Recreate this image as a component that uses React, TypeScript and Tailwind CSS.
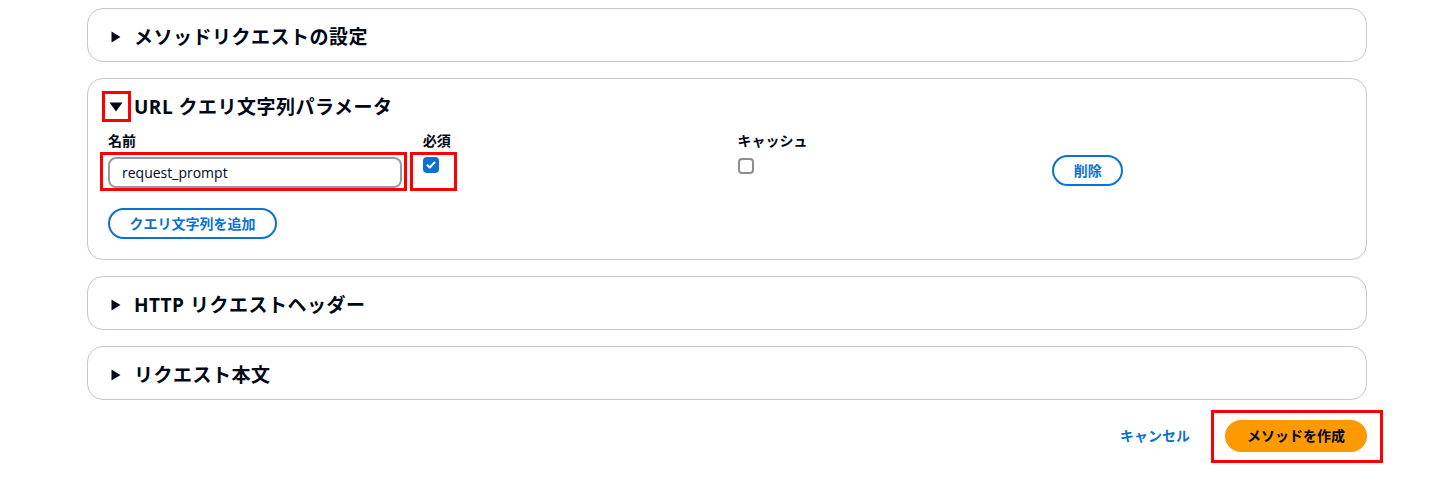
import React, { useState } from "react";

const font = { fontFamily: '"Open Sans", "Noto Sans CJK JP", sans-serif' };

const CaretRight = () => (
  <svg width="16" height="16" viewBox="0 0 16 16" className="shrink-0">
    <polygon points="3.5,2.5 12.5,8 3.5,13.5" fill="#000716" />
  </svg>
);

const CaretDown = () => (
  <svg width="16" height="16" viewBox="0 0 16 16" className="shrink-0">
    <polygon points="1.5,3.5 14.5,3.5 8,12.5" fill="#000716" />
  </svg>
);

// red annotation frame drawn over an element
const Mark = ({ className }: { className: string }) => (
  <div className={`pointer-events-none absolute border-[3px] border-[#ff0000] ${className}`} />
);

const Section = ({ title }: { title: string }) => (
  <div className="rounded-2xl border border-[#c6c6cd] bg-white px-5 pt-4 pb-3">
    <div className="flex items-center gap-[10px] h-6">
      <CaretRight />
      <h2 className="text-[19px] tracking-[0.5px] font-bold leading-6 text-[#000716]">{title}</h2>
    </div>
  </div>
);

const Check = ({ on, toggle }: { on: boolean; toggle: () => void }) => (
  <button
    onClick={toggle}
    className={`flex h-4 w-4 items-center justify-center rounded-[4px] ${
      on ? "bg-[#0972d3]" : "border-2 border-[#8c8c94] bg-white"
    }`}
  >
    {on && (
      <svg width="12" height="12" viewBox="0 0 12 12">
        <path d="M2.5 6.2l2.3 2.3 4.7-5" stroke="white" strokeWidth="2" fill="none" strokeLinecap="round" strokeLinejoin="round" />
      </svg>
    )}
  </button>
);

export default function App() {
  const [required, setRequired] = useState(true);
  const [cache, setCache] = useState(false);

  return (
    <div className="min-h-[485px] w-[1452px] bg-white" style={font}>
      <div className="ml-[87px] w-[1280px] pt-2 flex flex-col gap-4">
        <Section title="メソッドリクエストの設定" />

        <div className="rounded-2xl border border-[#c6c6cd] bg-white px-5 pt-4 pb-5">
          <div className="flex items-center gap-[10px] h-6">
            <div className="relative">
              <CaretDown />
              <Mark className="-left-[6px] -right-[7px] -top-[8px] -bottom-[7px]" />
            </div>
            <h2 className="text-[19px] tracking-[0.5px] font-bold leading-6 text-[#000716]">
              URL クエリ文字列パラメータ
            </h2>
          </div>

          <div className="mt-3 grid grid-cols-4 gap-x-[21px]">
            <div className="flex flex-col">
              <span className="text-sm font-bold leading-5 text-[#000716]">名前</span>
              <div className="relative mt-[6px]">
                <input
                  defaultValue="request_prompt"
                  className="h-[31px] w-full rounded-lg border-2 border-[#9a9aa2] px-3 text-sm text-[#000716] outline-none"
                />
                <Mark className="-left-[8px] -right-[5px] -top-[5px] -bottom-[3px]" />
              </div>
            </div>
            <div className="flex flex-col">
              <span className="text-sm font-bold leading-5 text-[#000716]">必須</span>
              <div className="mt-[6px] flex">
                <div className="relative">
                  <Check on={required} toggle={() => setRequired(!required)} />
                  <Mark className="-left-[13px] -right-[18px] -top-[5px] -bottom-[18px]" />
                </div>
              </div>
            </div>
            <div className="flex flex-col">
              <span className="text-sm font-bold leading-5 text-[#000716]">キャッシュ</span>
              <div className="mt-[7px] flex">
                <Check on={cache} toggle={() => setCache(!cache)} />
              </div>
            </div>
            <div className="flex items-start pt-6">
              <button className="h-[31px] w-[71px] rounded-full border-2 border-[#0972d3] text-sm font-bold text-[#0972d3]">
                削除
              </button>
            </div>
          </div>

          <button className="mt-5 h-[31px] w-[169px] rounded-full border-2 border-[#0972d3] text-sm font-bold text-[#0972d3]">
            クエリ文字列を追加
          </button>
        </div>

        <Section title="HTTP リクエストヘッダー" />
        <Section title="リクエスト本文" />

        <div className="mt-1 flex items-center justify-end gap-[35px]">
          <button className="text-sm font-bold text-[#0972d3]">キャンセル</button>
          <div className="relative">
            <button className="h-8 w-[142px] rounded-full border-2 border-[#ff9900] bg-[#ff9900] text-sm font-bold text-[#000716]">
              メソッドを作成
            </button>
            <Mark className="-left-[14px] -right-[16px] -top-[10px] -bottom-[11px]" />
          </div>
        </div>
      </div>
    </div>
  );
}
